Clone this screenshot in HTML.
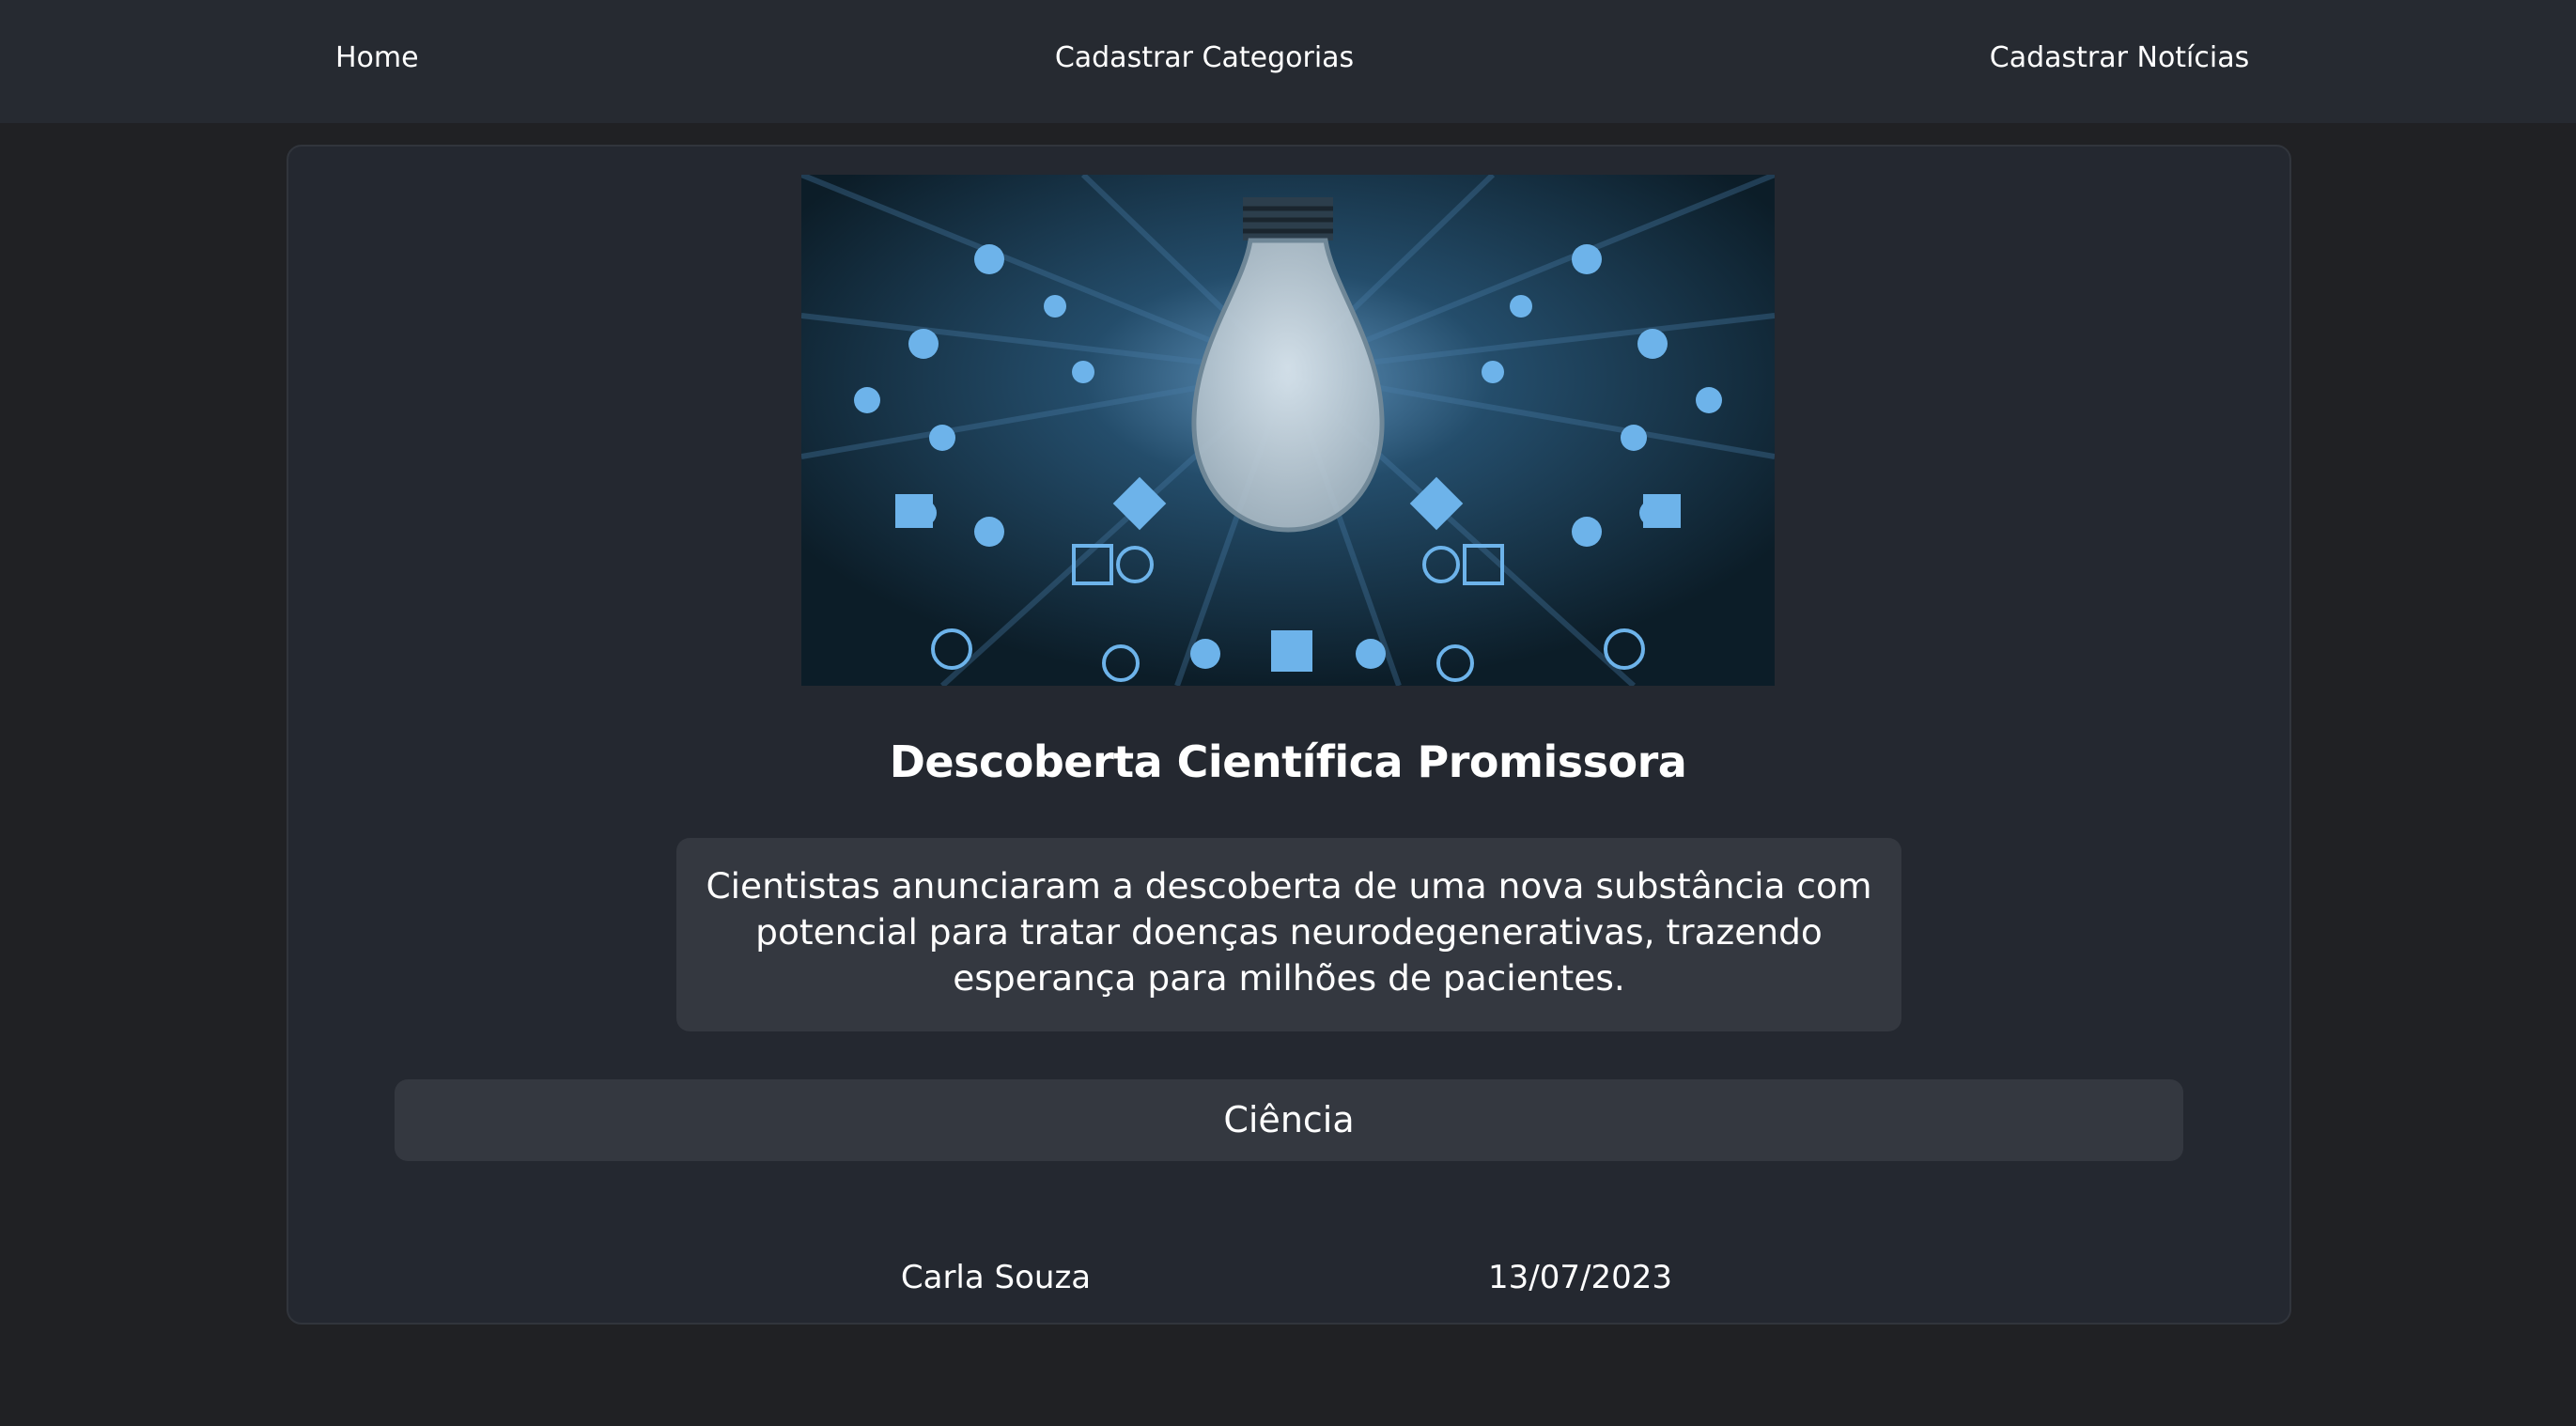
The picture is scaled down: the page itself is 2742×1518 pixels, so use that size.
<!DOCTYPE html>
<html><head><meta charset="utf-8"><style>
html,body{margin:0;padding:0}
body{width:2742px;height:1518px;background:#202124;font-family:"DejaVu Sans","Liberation Sans",sans-serif;color:#fff;position:relative;overflow:hidden}
.nav{position:absolute;left:0;top:0;width:2742px;height:131px;background:#262a31}
.nav span{position:absolute;top:40px;font-size:30px;line-height:44px}
.card{position:absolute;left:305px;top:154px;width:2134px;height:1256px;background:#242830;border:2px solid #31353c;border-radius:16px;box-sizing:border-box}
.img{position:absolute;left:853px;top:186px;width:1036px;height:544px}
.title{position:absolute;left:0;width:2742px;top:776px;text-align:center;font-size:46px;font-weight:bold;line-height:70px;letter-spacing:-0.5px}
.desc{position:absolute;left:720px;top:892px;width:1304px;height:206px;background:#343840;border-radius:14px;text-align:center;font-size:37.5px;line-height:49px;box-sizing:border-box;padding-top:27px}
.cat{position:absolute;left:420px;top:1149px;width:1904px;height:87px;background:#343840;border-radius:14px;text-align:center;font-size:38px;line-height:87px}
.ft{position:absolute;top:1336px;font-size:34px;line-height:48px;transform:translateX(-50%)}
</style></head><body>
<div class="nav">
<span style="left:357px">Home</span>
<span style="left:1282px;transform:translateX(-50%)">Cadastrar Categorias</span>
<span style="left:2256px;transform:translateX(-50%)">Cadastrar Notícias</span>
</div>
<div class="card"></div>
<svg class="img" viewBox="0 0 1036 544" preserveAspectRatio="none">
<defs>
<radialGradient id="g" cx="0.5" cy="0.4" r="0.6"><stop offset="0" stop-color="#5c8fb8"/><stop offset="0.35" stop-color="#244d6b"/><stop offset="1" stop-color="#0c1d28"/></radialGradient>
<radialGradient id="b" cx="0.5" cy="0.45" r="0.6"><stop offset="0" stop-color="#dfe8ee"/><stop offset="1" stop-color="#a9b9c4"/></radialGradient>
</defs>
<rect width="1036" height="544" fill="url(#g)"/>
<g stroke="#4a7fa8" stroke-opacity="0.35" stroke-width="6">
<line x1="518" y1="210" x2="0" y2="0"/><line x1="518" y1="210" x2="1036" y2="0"/><line x1="518" y1="210" x2="0" y2="300"/><line x1="518" y1="210" x2="1036" y2="300"/><line x1="518" y1="210" x2="150" y2="544"/><line x1="518" y1="210" x2="886" y2="544"/><line x1="518" y1="210" x2="300" y2="0"/><line x1="518" y1="210" x2="736" y2="0"/><line x1="518" y1="210" x2="0" y2="150"/><line x1="518" y1="210" x2="1036" y2="150"/><line x1="518" y1="210" x2="400" y2="544"/><line x1="518" y1="210" x2="636" y2="544"/>
</g>
<g fill="#6db3ea">
<circle cx="200" cy="90" r="16"/><circle cx="836" cy="90" r="16"/><circle cx="130" cy="180" r="16"/><circle cx="906" cy="180" r="16"/><circle cx="70" cy="240" r="14"/><circle cx="966" cy="240" r="14"/><circle cx="150" cy="280" r="14"/><circle cx="886" cy="280" r="14"/><circle cx="130" cy="360" r="14"/><circle cx="906" cy="360" r="14"/><circle cx="200" cy="380" r="16"/><circle cx="836" cy="380" r="16"/><circle cx="355" cy="415" r="18" fill="none" stroke="#6db3ea" stroke-width="4"/><circle cx="681" cy="415" r="18" fill="none" stroke="#6db3ea" stroke-width="4"/><circle cx="160" cy="505" r="20" fill="none" stroke="#6db3ea" stroke-width="4"/><circle cx="876" cy="505" r="20" fill="none" stroke="#6db3ea" stroke-width="4"/><rect x="340" y="330" width="40" height="40" transform="rotate(45 360 350)"/><rect x="656" y="330" width="40" height="40" transform="rotate(45 676 350)"/><rect x="500" y="485" width="44" height="44"/><circle cx="430" cy="510" r="16"/><circle cx="606" cy="510" r="16"/><circle cx="340" cy="520" r="18" fill="none" stroke="#6db3ea" stroke-width="4"/><circle cx="696" cy="520" r="18" fill="none" stroke="#6db3ea" stroke-width="4"/><circle cx="270" cy="140" r="12"/><circle cx="766" cy="140" r="12"/><circle cx="300" cy="210" r="12"/><circle cx="736" cy="210" r="12"/><rect x="100" y="340" width="40" height="36"/><rect x="896" y="340" width="40" height="36"/><rect x="290" y="395" width="40" height="40" fill="none" stroke="#6db3ea" stroke-width="4"/><rect x="706" y="395" width="40" height="40" fill="none" stroke="#6db3ea" stroke-width="4"/>
</g>
<path d="M470 24 h96 v46 h-96z" fill="#2c3e4c"/>
<g stroke="#1a252e" stroke-width="5"><line x1="470" y1="36" x2="566" y2="36"/><line x1="470" y1="48" x2="566" y2="48"/><line x1="470" y1="60" x2="566" y2="60"/></g>
<path d="M478 70 C470 120 420 180 418 260 C416 330 460 378 518 378 C576 378 620 330 618 260 C616 180 566 120 558 70 Z" fill="url(#b)" fill-opacity="0.9" stroke="#6f8797" stroke-width="5"/>
</svg>
<div class="title">Descoberta Científica Promissora</div>
<div class="desc">Cientistas anunciaram a descoberta de uma nova substância com<br>potencial para tratar doenças neurodegenerativas, trazendo<br>esperança para milhões de pacientes.</div>
<div class="cat">Ciência</div>
<div class="ft" style="left:1060px">Carla Souza</div>
<div class="ft" style="left:1682px">13/07/2023</div>
</body></html>
